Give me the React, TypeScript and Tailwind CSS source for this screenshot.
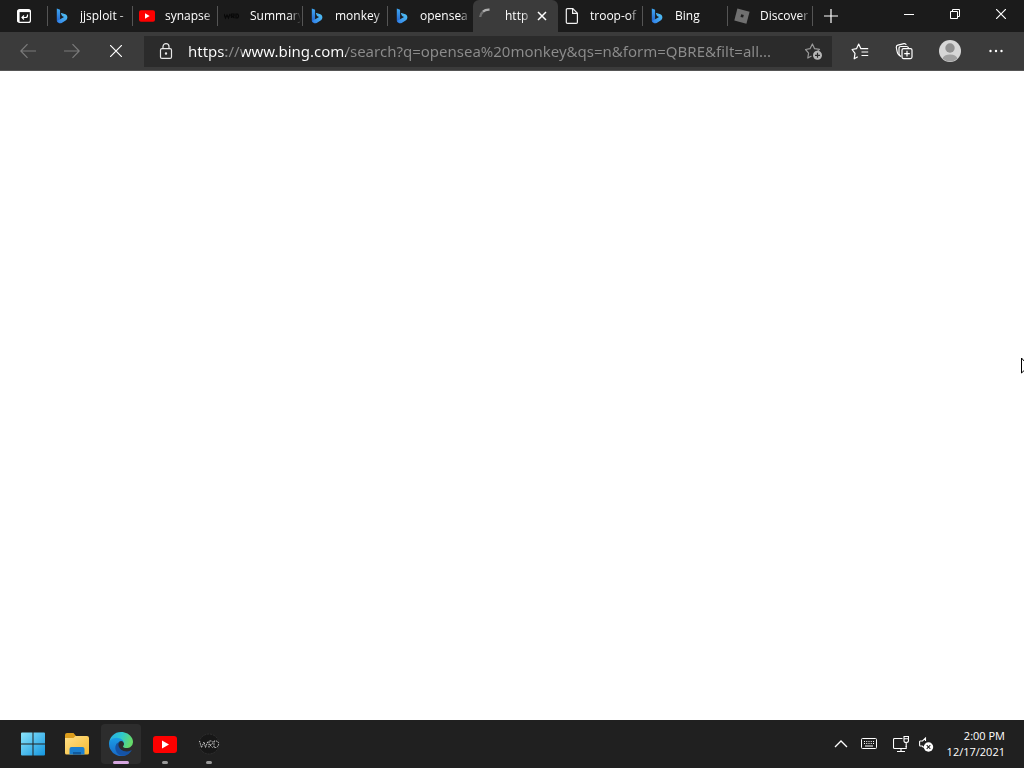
import React from 'react';

type TabIcon = 'bing' | 'youtube' | 'dark' | 'spinner' | 'file' | 'roblox';

interface Tab {
  title: string;
  icon: TabIcon;
  active?: boolean;
}

const TABS: Tab[] = [
  { title: 'jjsploit -', icon: 'bing' },
  { title: 'synapse', icon: 'youtube' },
  { title: 'Summary', icon: 'dark' },
  { title: 'monkey', icon: 'bing' },
  { title: 'opensea', icon: 'bing' },
  { title: 'http', icon: 'spinner', active: true },
  { title: 'troop-of', icon: 'file' },
  { title: 'Bing', icon: 'bing' },
  { title: 'Discover', icon: 'roblox' },
];

const URL_TEXT =
  'https://www.bing.com/search?q=opensea%20monkey&qs=n&form=QBRE&filt=all...';

function BingIcon() {
  return (
    <svg className="size-4" viewBox="0 0 16 16">
      <defs>
        <linearGradient id="bingStem" x1="0" y1="0" x2="0" y2="1">
          <stop offset="0" stopColor="#3fa9f5" />
          <stop offset="1" stopColor="#2360c9" />
        </linearGradient>
        <linearGradient id="bingBowl" x1="0" y1="1" x2="1" y2="0">
          <stop offset="0" stopColor="#2f7de8" />
          <stop offset="1" stopColor="#54c8f5" />
        </linearGradient>
      </defs>
      <path d="M2.800.6 6.100 1.800v9.600L3.700 14.400Q2.800 13.800 2.800 12.600Z" fill="url(#bingStem)" />
      <path
        d="M7.500 5c-.4-.2-.7.100-.6.500L8 8.100l2 .9-6.800 3.900c.7 2.200 2.700 2.900 4.500 2l3.900-2.300c2.400-1.700 2.500-5.100-.3-6.400Z"
        fill="url(#bingBowl)"
      />
    </svg>
  );
}

function YoutubeIcon({ className }: { className: string }) {
  return (
    <svg className={className} viewBox="0 0 24 17">
      <rect width="24" height="17" rx="3" fill="#fe0000" />
      <path d="m9 4.500 7 4-7 4z" fill="#fff" />
    </svg>
  );
}

function TabGlyph({ icon }: { icon: TabIcon }) {
  switch (icon) {
    case 'bing':
      return <BingIcon />;
    case 'youtube':
      return <YoutubeIcon className="h-3 w-4" />;
    case 'dark':
      return (
        <svg className="size-4" viewBox="0 0 16 16" fill="none" stroke="#080808" strokeWidth="1.200">
          <path d="m0 6 1.500 4L3 7l1.500 3L6 6m1.500 4V6H10v2H7.500l3 2M12 6v4h1.500q2-2 0-4Z" />
        </svg>
      );
    case 'spinner':
      return (
        <svg className="size-4" viewBox="0 0 16 16" fill="none" strokeWidth="2.400">
          <path d="M1.200 9A7 7 0 0 1 4 3.700" stroke="#707070" />
          <path d="M4 3.700Q6.500 1.400 10.500 1.700" stroke="#b0b0b0" />
        </svg>
      );
    case 'file':
      return (
        <svg className="size-4" viewBox="0 0 16 16" fill="none" stroke="#f2f2f2" strokeWidth="1.200">
          <path d="M3.500.6h5.300l4.600 4.600v9q0 1.200-1.200 1.200H3.500q-1.200 0-1.200-1.200V1.800Q2.300.6 3.500.6Z" />
          <path d="M8.600.8v4.600h4.600" />
        </svg>
      );
    case 'roblox':
      return (
        <svg className="size-4" viewBox="0 0 16 16">
          <path d="m3.400.4 12.200 3.300-3.200 12L.3 12.400Z" fill="#707070" />
          <path d="m7.200 6.300 2.600.7-.7 2.600-2.600-.7Z" fill="#1f1f1f" />
        </svg>
      );
  }
}

function TabItem({ tab }: { tab: Tab }) {
  return (
    <div
      className={
        tab.active
          ? 'flex h-8 w-[85px] items-center rounded-t-md bg-[#3b3b3b] pr-2 pl-1.5'
          : 'flex h-8 w-[85px] items-center pr-0.5 pl-1.5'
      }
    >
      <button role="tab" aria-selected={!!tab.active} className="flex min-w-0 flex-1 items-center gap-2.5 text-left">
        <span className="flex size-4 shrink-0 items-center justify-center">
          <TabGlyph icon={tab.icon} />
        </span>
        <span className="min-w-0 flex-1 overflow-hidden text-xs whitespace-nowrap text-white [mask-image:linear-gradient(to_left,transparent,black_12px)]">
          {tab.title}
        </span>
      </button>
      {tab.active && (
        <button aria-label="Close tab" className="flex size-4 shrink-0 items-center justify-center">
          <svg className="size-2.5" viewBox="0 0 10 10" stroke="#fff" strokeWidth="1.500">
            <path d="m1 1 8 8M9 1 1 9" />
          </svg>
        </button>
      )}
    </div>
  );
}

function TitleBar() {
  return (
    <header className="flex h-8 shrink-0 items-center bg-[#1b1b1b]">
      <button aria-label="Tab actions" className="flex h-8 w-12 items-center justify-center">
        <svg className="size-4" viewBox="0 0 16 16" fill="none" stroke="#fff" strokeWidth="1.200">
          <rect x="1.600" y="1.600" width="12.800" height="12.800" rx="2" />
          <path d="M1.800 3h12.400" strokeWidth="2.200" />
          <path d="M2.600 3v11" strokeWidth="2" />
          <path d="M11.500 6.500v1q0 2-2 2H6m2-2-2 2 2 2" />
        </svg>
      </button>
      <div role="tablist" className="flex">
        {TABS.map((tab, i) => {
          const divider = !tab.active && !TABS[i - 1]?.active;
          return (
            <div key={tab.title} className="flex items-center">
              <span className={divider ? '-ml-px h-5 w-px bg-[#555]' : '-ml-px h-5 w-px'} />
              <TabItem tab={tab} />
            </div>
          );
        })}
      </div>
      <span className="-ml-px h-5 w-px bg-[#555]" />
      <button aria-label="New tab" className="flex h-8 w-9 items-center justify-center">
        <svg className="size-3.5" viewBox="0 0 14 14" stroke="#fff" strokeWidth="1.200">
          <path d="M7 0v14M0 7h14" />
        </svg>
      </button>
      <div className="ml-auto flex pb-1">
        <button aria-label="Minimize" className="flex h-7 w-[46px] items-center justify-center">
          <svg className="size-2.5" viewBox="0 0 10 10" stroke="#fff">
            <path d="M0 5.500h10" />
          </svg>
        </button>
        <button aria-label="Restore" className="flex h-7 w-[46px] items-center justify-center">
          <svg className="size-2.5" viewBox="0 0 10 10" fill="none" stroke="#fff">
            <path d="M.5 2.500h7v7h-7zM2.500 2.500v-2h7v7h-2" />
          </svg>
        </button>
        <button aria-label="Close" className="flex h-7 w-[46px] items-center justify-center">
          <svg className="size-2.5" viewBox="0 0 10 10" stroke="#fff" strokeWidth="1.200">
            <path d="m0 0 10 10M10 0 0 10" />
          </svg>
        </button>
      </div>
    </header>
  );
}

function Toolbar() {
  return (
    <div className="flex h-[39px] shrink-0 items-center border-b border-[#555] bg-[#3b3b3b] px-1.5">
      <button aria-label="Back" className="flex h-8 w-11 items-center justify-center">
        <svg className="size-4" viewBox="0 0 16 16" fill="none" stroke="#7b7b7b" strokeWidth="1.200">
          <path d="M16 8H.8M7.500 1.200.8 8l6.700 6.800" />
        </svg>
      </button>
      <button aria-label="Forward" className="flex h-8 w-11 items-center justify-center">
        <svg className="size-4" viewBox="0 0 16 16" fill="none" stroke="#7b7b7b" strokeWidth="1.200">
          <path d="M0 8h15.200M8.500 1.200 15.200 8l-6.700 6.800" />
        </svg>
      </button>
      <button aria-label="Stop" className="flex h-8 w-11 items-center justify-center">
        <svg className="size-3" viewBox="0 0 12 12" stroke="#fff" strokeWidth="1.200">
          <path d="m0 0 12 12M12 0 0 12" />
        </svg>
      </button>
      <div className="ml-1.5 flex h-[31px] min-w-0 flex-1 items-center bg-[#2b2b2b]">
        <label htmlFor="address" aria-label="Address" className="flex w-11 shrink-0 items-center justify-center">
          <svg className="size-4" viewBox="0 0 16 16" fill="none" stroke="#e8e8e8" strokeWidth="1.200">
            <rect x="2.500" y="5.600" width="11" height="9.800" rx="1.500" />
            <path d="M5 5.500V3.600a3 3 0 0 1 6 0v1.900" />
            <circle cx="8" cy="10.500" r=".6" fill="#fff" />
          </svg>
        </label>
        {/* scheme and host are bright, the rest of the address is dimmed */}
        <input
          id="address"
          type="text"
          readOnly
          value={URL_TEXT}
          className="min-w-0 flex-1 bg-[linear-gradient(to_right,#fff_38px,#8c8c8c_38px,#8c8c8c_54px,#fff_54px,#fff_158px,#8c8c8c_158px)] bg-clip-text font-['Noto_Sans',sans-serif] text-[15px] leading-6 text-transparent outline-none"
        />
        <button aria-label="Add to favorites" className="flex h-8 w-9 shrink-0 items-center justify-center">
          <svg className="size-[18px]" viewBox="0 0 18 18" fill="none" stroke="#999" strokeWidth="1.200">
            <path d="M6.500 14 2.800 16l.8-4.800L.6 7.500l4.400-.8L7.400 2l2.200 4.700 4.900.7-2 2" strokeLinejoin="round" />
            <circle cx="12.500" cy="13.300" r="4.500" fill="#b5b5b5" stroke="none" />
            <path d="M12.500 10.800v5M10 13.300h5" stroke="#2b2b2b" />
          </svg>
        </button>
      </div>
      <div className="ml-1.5 flex">
        <button aria-label="Favorites" className="flex h-8 w-11 items-center justify-center">
          <svg className="size-[18px]" viewBox="0 0 18 18" fill="none" stroke="#fff" strokeWidth="1.200" strokeLinejoin="round">
            <path d="m6.800 14.800-3.600 2 .8-5.500-2.900-3.800 4.400-.8L7.700 2l2.200 4.700h7.300M10.500 10h6.700M10.500 13.500h6.700" />
          </svg>
        </button>
        <button aria-label="Collections" className="flex h-8 w-11 items-center justify-center">
          <svg className="size-[18px]" viewBox="0 0 18 18" fill="none" stroke="#fff" strokeWidth="1.200">
            <path d="M4.200 13.200Q2.600 12 2.200 10L1.300 5.500Q1.100 3.700 2.800 3.200L9 1.600q1.700-.2 2.300 1.300" />
            <path d="M6 14.500Q4 13.500 4 11.500V6.500q0-2 2-2h5.500q1.500 0 2 1.500" />
            <rect x="7" y="6.600" width="10" height="10" rx="1.500" fill="#3b3b3b" />
            <path d="M12 8.800v5.600m-2.800-2.800h5.600" />
          </svg>
        </button>
        <button aria-label="Profile" className="flex h-8 w-12 items-center justify-center">
          <svg className="size-[22px]" viewBox="0 0 22 22">
            <circle cx="11" cy="11" r="11" fill="#d6d6d6" />
            <circle cx="11" cy="8" r="4.700" fill="#8f8f8f" />
            <path d="M3.500 18.500Q5 14.500 11 14.500t7.500 4A11 11 0 0 1 3.500 18.500Z" fill="#a0a0a0" />
          </svg>
        </button>
        <button aria-label="Settings and more" className="flex h-8 w-11 items-center justify-center">
          <svg className="size-3.5" viewBox="0 0 14 14" fill="#fff">
            <circle cx="1.500" cy="7" r="1.200" />
            <circle cx="7" cy="7" r="1.200" />
            <circle cx="12.500" cy="7" r="1.200" />
          </svg>
        </button>
      </div>
    </div>
  );
}

function EdgeIcon() {
  return (
    <svg className="size-6" viewBox="0 0 256 256">
      <defs>
        <linearGradient id="edgeA" x1="0" y1="0" x2="1" y2=".3">
          <stop offset="0" stopColor="#25a9e8" />
          <stop offset=".55" stopColor="#2fc9cc" />
          <stop offset="1" stopColor="#65da6b" />
        </linearGradient>
        <linearGradient id="edgeB" x1="0" y1="0" x2="0" y2="1">
          <stop offset="0" stopColor="#1ba1e8" />
          <stop offset="1" stopColor="#1769c7" />
        </linearGradient>
      </defs>
      <path
        d="M235.700 195.500a94 94 0 0 1-10.600 4.700 102 102 0 0 1-35.900 6.500c-47.300 0-88.500-32.500-88.500-74.300a31.500 31.500 0 0 1 16.400-27.300c-42.800 1.800-53.800 46.400-53.800 72.500 0 74 68.100 81.400 82.800 81.400 7.900 0 19.800-2.300 27-4.600l1.300-.4a128 128 0 0 0 66.600-52.800 4 4 0 0 0-5.300-5.700Z"
        fill="#1553a5"
      />
      <path
        d="M105.700 241.400A79 79 0 0 1 83 220.100a80.700 80.700 0 0 1 29.500-120c3.200-1.500 8.500-4.100 15.600-4a32.400 32.400 0 0 1 25.700 13 32 32 0 0 1 6.300 18.700c0-.2 24.500-79.600-80-79.600C36.100 48.200 0 89.900 0 126.500a130 130 0 0 0 12.100 56 128 128 0 0 0 156.400 67 75.500 75.500 0 0 1-62.800-8Z"
        fill="url(#edgeB)"
      />
      <path
        d="M152.300 148.900c-.8 1-3.300 2.500-3.300 5.700 0 2.600 1.700 5.200 4.800 7.300 14.300 10 41.500 8.600 41.500 8.600a59.600 59.600 0 0 0 30.300-8.300 61.400 61.400 0 0 0 30.400-53c.3-22.400-8-37.300-11.300-43.900C223.500 23.900 177.700 0 128 0A128 128 0 0 0 0 126.200c.5-36.500 36.800-66 80-66 3.500 0 23.500.3 42 10 16.300 8.600 24.900 19 30.800 29.200 6.200 10.700 7.300 24.100 7.300 29.500s-2.700 13.300-7.800 20Z"
        fill="url(#edgeA)"
      />
    </svg>
  );
}

interface TaskbarButtonProps {
  label: string;
  running?: boolean;
  active?: boolean;
  children: React.ReactNode;
}

function TaskbarButton({ label, running, active, children }: TaskbarButtonProps) {
  return (
    <button
      aria-label={label}
      className={
        active
          ? 'relative flex size-10 items-center justify-center rounded bg-[#2d2d2d]'
          : 'relative flex size-10 items-center justify-center rounded'
      }
    >
      {children}
      {active && <span className="absolute bottom-0 h-[3px] w-4 rounded-full bg-[#d6a7e0]" />}
      {running && !active && <span className="absolute bottom-0 h-[3px] w-1.5 rounded-full bg-[#9a9a9a]" />}
    </button>
  );
}

function Taskbar() {
  return (
    <footer className="flex h-12 shrink-0 items-center justify-between bg-[#202020] pr-[19px] pl-[13px]">
      <div className="flex gap-1">
        <TaskbarButton label="Start">
          <svg className="size-6" viewBox="0 0 24 24">
            <defs>
              <linearGradient id="win" x1="0" y1="0" x2="1" y2="1">
                <stop offset="0" stopColor="#8be4fb" />
                <stop offset="1" stopColor="#1496e0" />
              </linearGradient>
            </defs>
            <path d="M0 1.500Q0 .5 1 .5h10.500v11H0zM12.500.5H23q1 0 1 1v10H12.500zM0 12.500h11.500v11H1q-1 0-1-1zM12.500 12.500H24v10q0 1-1 1H12.500z" fill="url(#win)" />
          </svg>
        </TaskbarButton>
        <TaskbarButton label="File Explorer">
          <svg className="size-6" viewBox="0 0 24 24">
            <defs>
              <linearGradient id="folder" x1="0" y1="0" x2="1" y2="1">
                <stop offset="0" stopColor="#ffe08a" />
                <stop offset="1" stopColor="#f5ba30" />
              </linearGradient>
            </defs>
            <path d="M0 3q0-2 2-2h6.500L11 4v4H0Z" fill="#dc9d1c" />
            <path d="M0 6h8.500l2-2H22q2 0 2 2v15q0 1.500-1.500 1.500h-21Q0 22.500 0 21Z" fill="url(#folder)" />
            <path d="M4.500 22.500V17q0-2 2-2h11q2 0 2 2v5.500Z" fill="#1b7fcf" />
            <path d="M8 22.500V20h8v2.500Z" fill="#115a9d" />
          </svg>
        </TaskbarButton>
        <TaskbarButton label="Microsoft Edge" running active>
          <EdgeIcon />
        </TaskbarButton>
        <TaskbarButton label="YouTube" running>
          <YoutubeIcon className="h-[17px] w-6" />
        </TaskbarButton>
        <TaskbarButton label="WeAreDevs" running>
          <svg className="size-6" viewBox="0 0 24 24" fill="none" stroke="#d0d0d0">
            <circle cx="12" cy="12" r="10" fill="#171717" stroke="#303030" strokeDasharray="2 1" />
            <path d="m2.500 9 2 6.500L7 10l1.500 5.500L11 9M12 15.500V9q4-.5 3.500 2t-3 1.500l3 3M17 9v6.500q4 .5 4.500-3.200T17 9" strokeDasharray="1.500 .8" />
          </svg>
        </TaskbarButton>
      </div>
      <div className="flex items-center">
        <button aria-label="Show hidden icons" className="flex h-10 w-7 items-center justify-center">
          <svg className="size-3.5" viewBox="0 0 14 14" fill="none" stroke="#fff" strokeWidth="1.300">
            <path d="m1 10 6-6 6 6" />
          </svg>
        </button>
        <button aria-label="Touch keyboard" className="flex h-10 w-7 items-center justify-center">
          <svg className="size-4" viewBox="0 0 16 16" fill="none" stroke="#fff">
            <rect x=".5" y="2.500" width="15" height="10" rx="1" />
            <path d="M3 5.500h10M3 7.500h10" strokeDasharray="1 1.250" />
            <path d="M4 10h8" />
          </svg>
        </button>
        <button aria-label="Network and volume" className="ml-2.5 flex h-10 items-center gap-2.5">
          <svg className="h-[18px] w-4" viewBox="0 0 16 18" fill="none" stroke="#fff" strokeWidth="1.100">
            <path d="M9.500 3.500H1.500q-1 0-1 1v8q0 1 1 1h11.700V11M4 16.500h8M8 13.500v3" />
            <path d="M11 1.500h4.500v4q0 2-2.300 2T11 5.500ZM13.200 7.500V12M11 3.800h4.500" />
          </svg>
          <svg className="size-4" viewBox="0 0 16 16" fill="none" stroke="#fff" strokeWidth="1.100">
            <path d="M6.500 5V2L3.500 5H1.200Q.6 5 .6 6v3q0 1 .6 1h2l1.500 1.500" />
            <circle cx="9.500" cy="11" r="4.700" fill="#fff" stroke="none" />
            <path d="m7.700 9.200 3.600 3.600m0-3.600-3.600 3.600" stroke="#202020" />
          </svg>
        </button>
        <button className="ml-3 text-right text-[11px] leading-4 text-white">
          <span className="block">2:00 PM</span>
          <span className="block">12/17/2021</span>
        </button>
      </div>
    </footer>
  );
}

export default function App() {
  return (
    <div className="flex h-screen flex-col overflow-hidden bg-white font-['Open_Sans','Noto_Sans',sans-serif]">
      <TitleBar />
      <Toolbar />
      <main className="relative flex-1 overflow-hidden bg-white">
        {/* mouse pointer resting on the window edge */}
        <svg className="absolute top-[286px] -right-2 h-[18px] w-3" viewBox="0 0 12 18" fill="#fff" stroke="#000">
          <path d="M1.500 1v15l3.500-3.300L7.500 17l2-1L7.500 12H11Z" />
        </svg>
      </main>
      <Taskbar />
    </div>
  );
}
